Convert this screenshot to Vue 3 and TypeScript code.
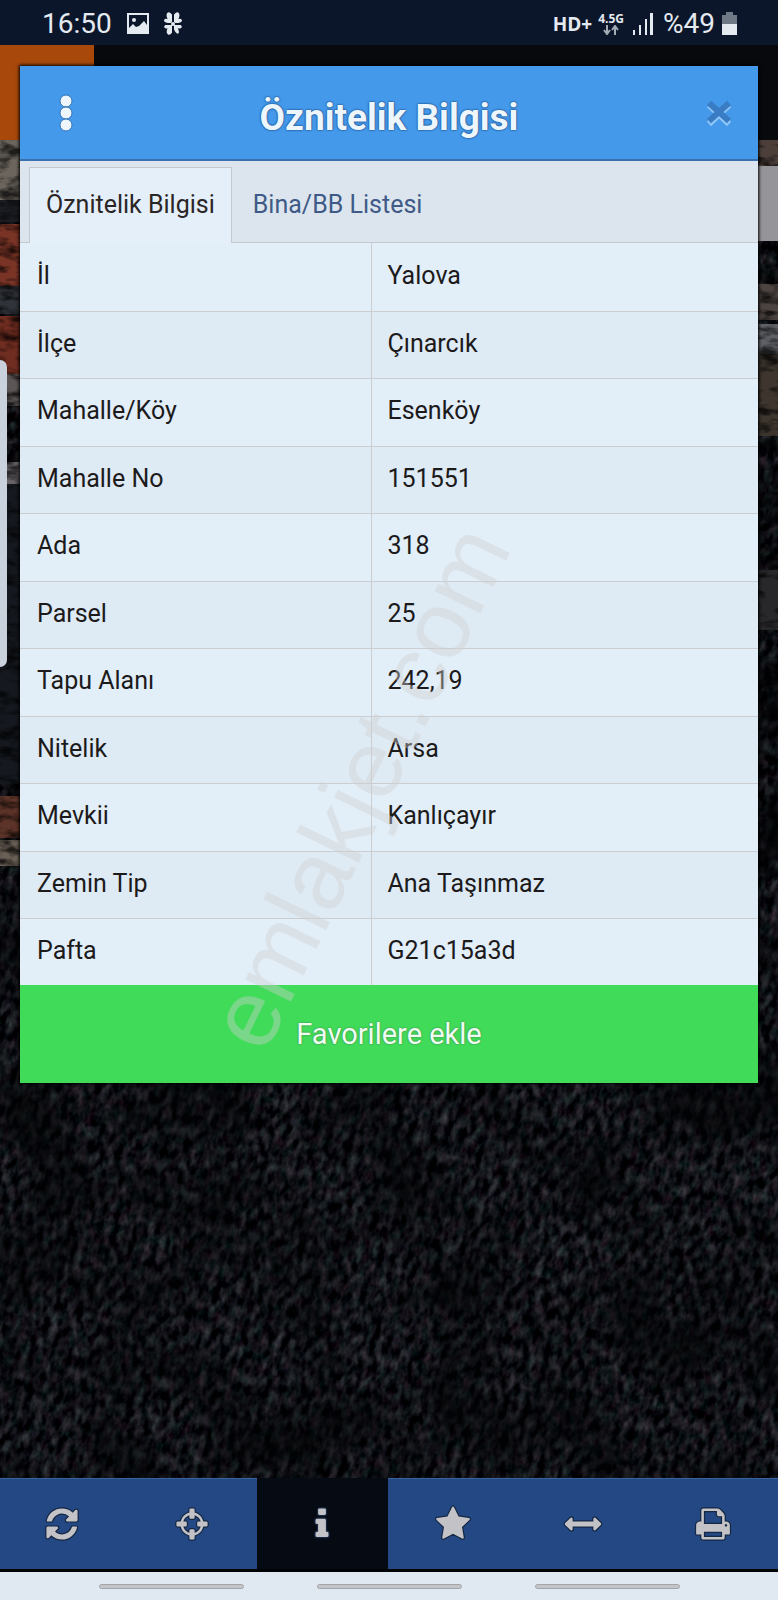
<script setup lang="ts">
import { ref } from 'vue'

interface Attribute {
  label: string
  value: string
}

interface Tool {
  id: string
  label: string
  path: string
}

const attributes: Attribute[] = [
  { label: 'İl', value: 'Yalova' },
  { label: 'İlçe', value: 'Çınarcık' },
  { label: 'Mahalle/Köy', value: 'Esenköy' },
  { label: 'Mahalle No', value: '151551' },
  { label: 'Ada', value: '318' },
  { label: 'Parsel', value: '25' },
  { label: 'Tapu Alanı', value: '242,19' },
  { label: 'Nitelik', value: 'Arsa' },
  { label: 'Mevkii', value: 'Kanlıçayır' },
  { label: 'Zemin Tip', value: 'Ana Taşınmaz' },
  { label: 'Pafta', value: 'G21c15a3d' },
]

const tabs: string[] = ['Öznitelik Bilgisi', 'Bina/BB Listesi']
const activeTab = ref<number>(0)
const activeTool = ref<string>('info')

const tools: Tool[] = [
  {
    id: 'refresh',
    label: 'Yenile',
    path: 'M1639 1056q0 5-1 7-64 268-268 434.5t-478 166.5q-146 0-282.5-55t-243.5-157l-129 129q-19 19-45 19t-45-19-19-45v-448q0-26 19-45t45-19h448q26 0 45 19t19 45-19 45l-137 137q71 66 161 102t187 36q134 0 250-65t186-179q11-17 53-117 8-23 30-23h192q13 0 22.5 9.5t9.5 22.5zm25-800v448q0 26-19 45t-45 19h-448q-26 0-45-19t-19-45 19-45l138-138q-148-137-349-137-134 0-250 65t-186 179q-11 17-53 117-8 23-30 23h-199q-13 0-22.5-9.5t-9.5-22.5v-7q65-268 270-434.5t480-166.5q146 0 284 55.5t245 156.5l130-129q19-19 45-19t45 19 19 45z',
  },
  {
    id: 'locate',
    label: 'Konum',
    path: 'M1325 1024h-109q-26 0-45-19t-19-45v-128q0-26 19-45t45-19h109q-32-108-112.5-188.5t-188.5-112.5v109q0 26-19 45t-45 19h-128q-26 0-45-19t-19-45v-109q-108 32-188.5 112.5t-112.5 188.5h109q26 0 45 19t19 45v128q0 26-19 45t-45 19h-109q32 108 112.5 188.5t188.5 112.5v-109q0-26 19-45t45-19h128q26 0 45 19t19 45v109q108-32 188.5-112.5t112.5-188.5zm339-192v128q0 26-19 45t-45 19h-143q-37 161-154.5 278.5t-278.5 154.5v143q0 26-19 45t-45 19h-128q-26 0-45-19t-19-45v-143q-161-37-278.5-154.5t-154.5-278.5h-143q-26 0-45-19t-19-45v-128q0-26 19-45t45-19h143q37-161 154.5-278.5t278.5-154.5v-143q0-26 19-45t45-19h128q26 0 45 19t19 45v143q161 37 278.5 154.5t154.5 278.5h143q26 0 45 19t19 45z',
  },
  {
    id: 'info',
    label: 'Bilgi',
    path: 'M1216 1344v128q0 26-19 45t-45 19h-512q-26 0-45-19t-19-45v-128q0-26 19-45t45-19h64v-384h-64q-26 0-45-19t-19-45v-128q0-26 19-45t45-19h384q26 0 45 19t19 45v576h64q26 0 45 19t19 45zm-128-1152v192q0 26-19 45t-45 19h-256q-26 0-45-19t-19-45v-192q0-26 19-45t45-19h256q26 0 45 19t19 45z',
  },
  {
    id: 'favorite',
    label: 'Favoriler',
    path: 'M1728 647q0 22-26 48l-363 354 86 500q1 7 1 20 0 21-10.5 35.5t-30.5 14.5q-19 0-40-12l-449-236-449 236q-22 12-40 12-21 0-31.5-14.5t-10.5-35.5q0-6 2-20l86-500-364-354q-25-27-25-48 0-37 56-46l502-73 225-455q19-41 49-41t49 41l225 455 502 73q56 9 56 46z',
  },
  {
    id: 'measure',
    label: 'Ölç',
    path: 'M1792 896q0 26-19 45l-256 256q-19 19-45 19t-45-19-19-45v-128h-1024v128q0 26-19 45t-45 19-45-19l-256-256q-19-19-19-45t19-45l256-256q19-19 45-19t45 19 19 45v128h1024v-128q0-26 19-45t45-19 45 19l256 256q19 19 19 45z',
  },
  {
    id: 'print',
    label: 'Yazdır',
    path: 'M448 1536h896v-256h-896v256zm0-640h896v-384h-160q-40 0-68-28t-28-68v-160h-640v640zm1152 64q0-26-19-45t-45-19-45 19-19 45 19 45 45 19 45-19 19-45zm128 0v416q0 13-9.5 22.5t-22.5 9.5h-224v160q0 40-28 68t-68 28h-960q-40 0-68-28t-28-68v-160h-224q-13 0-22.5-9.5t-9.5-22.5v-416q0-79 56.5-135.5t135.5-56.5h64v-544q0-40 28-68t68-28h672q40 0 88 20t76 48l152 152q28 28 48 76t20 88v256h64q79 0 135.5 56.5t56.5 135.5z',
  },
]
</script>

<template>
  <div class="screen">
    <header class="status">
      <div class="status-side">
        <span class="clock">16:50</span>
        <svg class="photo" viewBox="0 0 24 22" aria-hidden="true">
          <path fill="#e4eaf0" fill-rule="evenodd" d="M1 0h22v21H1zM3 2v17h18V2z" />
          <circle cx="8" cy="7" r="2" fill="#e4eaf0" />
          <path fill="#e4eaf0" d="M3 15l4-4 3 3 3-1 5-5 3 4v7H3z" />
        </svg>
        <svg class="clover" viewBox="0 0 18 24" aria-hidden="true">
          <g fill="#e4eaf0">
            <ellipse cx="6" cy="5" rx="3" ry="5" transform="rotate(-25 6 5)" />
            <ellipse cx="12" cy="5" rx="3" ry="5" transform="rotate(25 12 5)" />
            <ellipse cx="4" cy="9" rx="4" ry="2" transform="rotate(10 4 9)" />
            <ellipse cx="14" cy="9" rx="4" ry="2" transform="rotate(-10 14 9)" />
            <ellipse cx="4" cy="14" rx="4" ry="2" transform="rotate(-20 4 14)" />
            <ellipse cx="14" cy="14" rx="4" ry="2" transform="rotate(20 14 14)" />
            <ellipse cx="6" cy="18" rx="3" ry="5" transform="rotate(20 6 18)" />
            <ellipse cx="12" cy="17" rx="2" ry="5" transform="rotate(-25 12 17)" />
          </g>
          <path d="M9 1v21M0 12h18" stroke="#0b162b" stroke-width="2" />
          <circle cx="9" cy="12" r="2" fill="#e4eaf0" />
        </svg>
      </div>
      <div class="status-side">
        <span class="hd">HD+</span>
        <span class="network">
          <span>4.5G</span>
          <svg viewBox="0 0 16 10" aria-hidden="true">
            <path d="M4 0v9M1 5l3 4 3-4M12 10V1M9 5l3-4 3 4" fill="none" stroke="#a3abb5" stroke-width="2" />
          </svg>
        </span>
        <svg class="signal" viewBox="0 0 21 22" aria-hidden="true">
          <path d="M1 17h2v5H1zM7 12h2v10H7zM13 6h2v16h-2zM18 0h3v22h-3z" fill="#e4eaf0" />
        </svg>
        <span class="percent">%49</span>
        <svg class="battery" viewBox="0 0 15 23" aria-hidden="true">
          <path d="M4 0h7v3h4v9H0V3h4z" fill="#6f7985" />
          <path d="M0 12h15v11H0z" fill="#e4eaf0" />
        </svg>
      </div>
    </header>

    <main class="stage">
      <div class="backdrop" aria-hidden="true">
        <div class="appbar"><div class="brand"></div></div>
        <svg class="map" viewBox="0 0 778 1338" preserveAspectRatio="none">
          <defs>
            <filter id="forest" x="0" y="0" width="100%" height="100%" color-interpolation-filters="sRGB">
              <feTurbulence type="fractalNoise" baseFrequency="0.14 0.08" numOctaves="4" seed="8" />
              <feColorMatrix values="0.42 0.1 0 0 -0.195  0.42 0 0.1 0 -0.19  0.42 0.06 0.08 0 -0.19  0 0 0 0 1" />
            </filter>
            <filter id="tint" x="0" y="0" width="100%" height="100%" color-interpolation-filters="sRGB">
              <feTurbulence type="fractalNoise" baseFrequency="0.012" numOctaves="3" seed="5" />
              <feColorMatrix values="0 0 0 0 0.01  0 0 0 0 0.015  0 0 0 0 0.02  2.6 0 0 0 -0.95" />
            </filter>
            <filter id="soil" x="0" y="0" width="100%" height="100%" color-interpolation-filters="sRGB">
              <feTurbulence type="fractalNoise" baseFrequency="0.05 0.12" numOctaves="3" seed="3" />
              <feColorMatrix values="0 0 0 0 0  0 0 0 0 0  0 0 0 0 0  3 0 0 0 -1.3" />
            </filter>
          </defs>
          <rect x="-500" y="-300" width="1800" height="2000" filter="url(#forest)" transform="rotate(14 389 669)" />
          <rect width="778" height="1338" filter="url(#tint)" opacity="0.6" />
          <g>
            <rect width="22" height="60" fill="#6b655d" />
            <rect y="60" width="22" height="22" fill="#1b1c22" />
            <rect y="84" width="22" height="62" fill="#7a3426" />
            <rect y="146" width="22" height="28" fill="#30333a" />
            <rect y="176" width="22" height="58" fill="#6f2c20" />
            <rect y="234" width="22" height="32" fill="#5c5756" />
            <rect y="322" width="22" height="22" fill="#676266" />
            <rect y="344" width="22" height="300" fill="#15191f" />
            <rect y="656" width="22" height="42" fill="#5c3328" />
            <rect y="700" width="22" height="26" fill="#6a6056" />
            <rect x="756" width="22" height="26" fill="#4c3f3a" />
            <rect x="756" y="144" width="22" height="36" fill="#4d4441" />
            <rect x="756" y="184" width="22" height="30" fill="#5e6066" />
            <rect x="756" y="214" width="22" height="82" fill="#3d352e" />
            <rect x="756" y="430" width="22" height="60" fill="#28272a" />
          </g>
          <rect width="778" height="740" filter="url(#soil)" opacity="0.7" />
          <rect x="758" y="26" width="20" height="75" fill="#959498" />
          <rect x="-12" y="220" width="19" height="307" rx="7" fill="#c9d2dc" />
        </svg>
      </div>

      <section class="dialog" role="dialog" aria-labelledby="dialog-title">
        <div class="dialog-head">
          <button class="head-button" type="button" aria-label="Menü">
            <svg class="dots" viewBox="0 0 14 38" aria-hidden="true">
              <g fill="#eef6fd" stroke="#3573b4">
                <circle cx="7" cy="7" r="6" />
                <circle cx="7" cy="19" r="6" />
                <circle cx="7" cy="31" r="6" />
              </g>
            </svg>
          </button>
          <h1 id="dialog-title">Öznitelik Bilgisi</h1>
          <button class="head-button" type="button" aria-label="Kapat">
            <svg class="close" viewBox="0 0 28 28" aria-hidden="true">
              <path d="M4 6l20 19M24 6L4 25" stroke="#8fc6f8" stroke-width="6" />
              <path d="M4 4l20 18M24 4L4 22" stroke="#397cc4" stroke-width="6" />
            </svg>
          </button>
        </div>

        <div class="tabs" role="tablist">
          <button
            v-for="(tab, index) in tabs"
            :key="tab"
            class="tab"
            :class="{ active: index === activeTab }"
            type="button"
            role="tab"
            :aria-selected="index === activeTab"
            @click="activeTab = index"
          >
            {{ tab }}
          </button>
        </div>

        <table class="attributes">
          <tbody>
            <tr v-for="item in attributes" :key="item.label">
              <th scope="row">{{ item.label }}</th>
              <td>{{ item.value }}</td>
            </tr>
          </tbody>
        </table>

        <button class="favorite" type="button">Favorilere ekle</button>
        <span class="watermark">emlakjet.com</span>
      </section>
    </main>

    <nav class="toolbar" aria-label="Harita araçları">
      <button
        v-for="tool in tools"
        :key="tool.id"
        class="tool"
        :class="{ active: tool.id === activeTool }"
        type="button"
        :aria-label="tool.label"
        @click="activeTool = tool.id"
      >
        <svg viewBox="-90 -90 1972 1972" aria-hidden="true"><path :d="tool.path" /></svg>
      </button>
    </nav>

    <footer class="gestures" aria-hidden="true">
      <span></span>
      <span></span>
      <span></span>
    </footer>
  </div>
</template>

<style>
body {
  margin: 0;
  background: #08090d;
}
</style>

<style scoped>
.screen {
  display: flex;
  flex-direction: column;
  min-height: 100vh;
  overflow: hidden;
  font-family: Roboto, "Liberation Sans", sans-serif;
  background: #08090d;
}

button {
  margin: 0;
  padding: 0;
  border: 0;
  background: none;
  font: inherit;
  cursor: pointer;
}

.status {
  display: flex;
  align-items: center;
  justify-content: space-between;
  height: 45px;
  padding: 2px 41px 0 42px;
  box-sizing: border-box;
  background: #0b162b;
  color: #e4eaf0;
}

.status-side {
  display: flex;
  align-items: center;
}

.clock {
  font-size: 28px;
}

.photo {
  width: 24px;
  height: 22px;
  margin-left: 14px;
}

.clover {
  width: 18px;
  height: 24px;
  margin-left: 14px;
}

.hd {
  font-family: "Open Sans", sans-serif;
  font-size: 19px;
  font-weight: 700;
}

.network {
  display: flex;
  flex-direction: column;
  align-items: center;
  margin-left: 6px;
  font-family: "Open Sans", sans-serif;
  font-size: 12px;
  font-weight: 700;
  line-height: 13px;
}

.network svg {
  width: 16px;
  height: 10px;
}

.signal {
  width: 21px;
  height: 22px;
  margin-left: 8px;
}

.percent {
  margin-left: 10px;
  font-size: 28px;
}

.battery {
  width: 15px;
  height: 23px;
  margin-left: 7px;
}

.stage {
  position: relative;
  flex: 1;
}

.backdrop {
  position: absolute;
  inset: 0;
  display: flex;
  flex-direction: column;
}

.appbar {
  height: 95px;
  background: #08090d;
}

.brand {
  width: 94px;
  height: 95px;
  background: #a8480b;
}

.map {
  display: block;
  flex: 1;
  width: 100%;
  min-height: 0;
}

.dialog {
  position: relative;
  margin: 21px 20px 32px;
  box-shadow: 0 0 3px 1px #000;
  background: #e2eef8;
}

.dialog-head {
  display: flex;
  align-items: center;
  justify-content: space-between;
  height: 95px;
  padding: 0 11px;
  box-sizing: border-box;
  border-bottom: 2px solid #3a6fb0;
  background: #4499ea;
}

.dialog-head h1 {
  margin: 10px 0 0;
  font-size: 37px;
  line-height: 44px;
  font-weight: 700;
  color: #eef6fd;
  text-shadow: 0 0 2px #1e4f88, 0 0 2px #1e4f88;
}

.head-button {
  display: flex;
  align-items: center;
  justify-content: center;
  width: 56px;
  height: 56px;
}

.dots {
  width: 14px;
  height: 38px;
  margin-left: 14px;
}

.close {
  width: 28px;
  height: 28px;
}

.tabs {
  display: flex;
  height: 82px;
  padding: 6px 9px 0;
  box-sizing: border-box;
  border-bottom: 1px solid #c5c9ce;
  background: #dce5ee;
}

.tab {
  padding: 0 16px 2px;
  border: 1px solid transparent;
  border-bottom: 0;
  font-size: 25px;
  color: #3f5a86;
}

.tab.active {
  margin-bottom: -1px;
  border-color: #c5c9ce;
  background: #e4eff9;
  color: #2b2526;
}

.tab + .tab {
  padding-left: 20px;
}

.attributes {
  width: 100%;
  border-collapse: collapse;
  table-layout: fixed;
  font-size: 25px;
  line-height: 30px;
  color: #1c1a1b;
}

.attributes th,
.attributes td {
  height: 67px;
  padding: 0 16px 2px;
  box-sizing: border-box;
  border-bottom: 1px solid #cbcdd1;
  font-weight: 400;
  text-align: left;
}

.attributes th {
  width: 351px;
  padding-left: 17px;
  border-right: 1px solid #cbcdd1;
}

.attributes tr:nth-child(odd) > * {
  height: 68px;
}

.attributes tr:nth-child(even) {
  background: #deeaf4;
}

.attributes tr:last-child > * {
  height: 67px;
  border-bottom: 0;
}

.favorite {
  display: block;
  width: 100%;
  height: 98px;
  background: #41db5a;
  font-size: 29px;
  color: #effcf1;
  text-shadow: 0 0 2px #3c7747;
}

.watermark {
  position: absolute;
  top: 721px;
  left: 46%;
  font-family: "Liberation Sans", Arial, sans-serif;
  font-size: 96px;
  line-height: 1;
  color: rgba(208, 208, 208, 0.4);
  white-space: nowrap;
  pointer-events: none;
  transform: translate(-50%, -50%) rotate(-64deg);
}

.toolbar {
  position: relative;
  display: grid;
  grid-template-columns: repeat(6, 1fr);
  height: 94px;
  margin-left: -3px;
  box-sizing: border-box;
  border-bottom: 3px solid #020307;
  background: #234883;
}

.tool {
  display: flex;
  align-items: center;
  justify-content: center;
  border-top: 1px solid #37639f;
}

.tool.active {
  border-top-color: #060a12;
  background: #060a12;
}

.tool svg {
  width: 40px;
  height: 40px;
}

.tool path {
  fill: #c3c3c7;
  stroke: #152743;
  stroke-width: 120px;
  paint-order: stroke;
}

.gestures {
  display: flex;
  align-items: center;
  justify-content: center;
  gap: 73px;
  height: 28px;
  background: #e0e9f2;
}

.gestures span {
  width: 145px;
  height: 5px;
  box-sizing: border-box;
  border: 1px solid #a3a5a9;
  border-radius: 3px;
  background: #c4c5c8;
}
</style>
